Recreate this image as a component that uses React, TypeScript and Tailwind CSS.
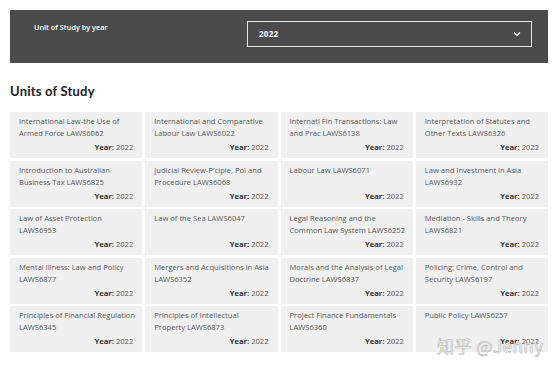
import React from "react";

const units = [
  ["International Law-the Use of", "Armed Force LAWS6062"],
  ["International and Comparative", "Labour Law LAWS6022"],
  ["Internatl Fin Transactions: Law", "and Prac LAWS6138"],
  ["Interpretation of Statutes and", "Other Texts LAWS6326"],
  ["Introduction to Australian", "Business Tax LAWS6825"],
  ["Judicial Review-P'ciple, Pol and", "Procedure LAWS6068"],
  ["Labour Law LAWS6071"],
  ["Law and Investment in Asia", "LAWS6932"],
  ["Law of Asset Protection", "LAWS6953"],
  ["Law of the Sea LAWS6047"],
  ["Legal Reasoning and the", "Common Law System LAWS6252"],
  ["Mediation - Skills and Theory", "LAWS6821"],
  ["Mental Illness: Law and Policy", "LAWS6877"],
  ["Mergers and Acquisitions in Asia", "LAWS6352"],
  ["Morals and the Analysis of Legal", "Doctrine LAWS6837"],
  ["Policing: Crime, Control and", "Security LAWS6197"],
  ["Principles of Financial Regulation", "LAWS6345"],
  ["Principles of Intellectual", "Property LAWS6873"],
  ["Project Finance Fundamentals", "LAWS6360"],
  ["Public Policy LAWS6257"],
];

export default function App() {
  return (
    <div
      className="relative w-[554px] h-[370px] bg-white overflow-hidden"
      style={{ fontFamily: "'Open Sans', Lato, Arial, sans-serif" }}
    >
      <div className="pl-[10px] pr-[6px] pt-[10px]">
        <div className="h-[53px] bg-[#4b4b4b] flex items-start">
          <div className="w-[237px] pl-[24px] pt-[12px] text-[7.3px] font-semibold text-white leading-[10px]">
            Unit of Study by year
          </div>
          <div className="mt-[11px] w-[285px] h-[26px] border border-[#e6e6e6] flex items-center justify-between pl-[11px] pr-[10px]">
            <span className="text-[8px] font-bold text-white tracking-[0.3px]">2022</span>
            <svg width="8" height="6" viewBox="0 0 8 6" fill="none">
              <path d="M1 1.5 L4 4.5 L7 1.5" stroke="#ffffff" strokeWidth="1.2" />
            </svg>
          </div>
        </div>
        <h2
          className="mt-[19px] text-[13px] font-bold text-[#222] leading-[18px] tracking-[0.2px]"
          style={{ fontFamily: "Lato, 'Open Sans', sans-serif" }}
        >
          Units of Study
        </h2>
        <div className="mt-[12px] grid grid-cols-4 gap-x-[3px] gap-y-[2.5px]">
          {units.map((u, i) => (
            <div key={i} className="h-[46px] bg-[#f0f0f0] pl-[9px] pr-[9px] pt-[3px] flex flex-col">
              <div className="text-[7.6px] leading-[12px] text-[#5a5a5a] h-[24px]">
                {u.map((l, j) => (
                  <div key={j} className="whitespace-nowrap">{l}</div>
                ))}
              </div>
              <div className="text-right text-[7.6px] leading-[12px] text-[#5a5a5a] mt-[2px]">
                <span className="font-bold text-[#333]">Year:</span> 2022
              </div>
            </div>
          ))}
        </div>
      </div>
      <div
        className="absolute left-[437px] top-[333px] text-[17px] text-white tracking-[0.5px]"
        style={{
          fontFamily: "'Noto Sans CJK SC', Lato, sans-serif",
          WebkitTextStroke: "0.6px #b5b5b5",
        }}
      >
        知乎 @Jenny
      </div>
    </div>
  );
}
